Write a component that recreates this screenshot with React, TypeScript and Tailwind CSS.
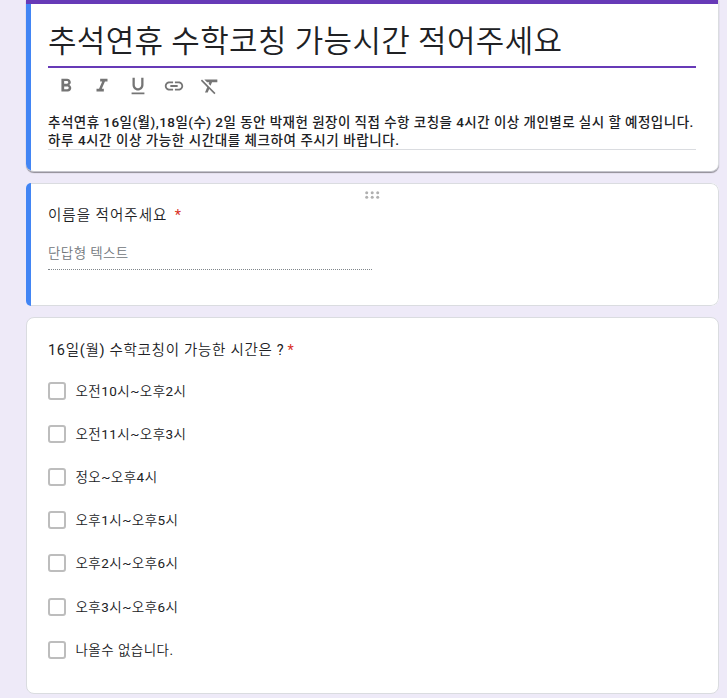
import React from 'react';
import {
  MdFormatBold,
  MdFormatItalic,
  MdFormatUnderlined,
  MdInsertLink,
  MdFormatClear,
} from 'react-icons/md';

const timeOptions = [
  '오전10시~오후2시',
  '오전11시~오후3시',
  '정오~오후4시',
  '오후1시~오후5시',
  '오후2시~오후6시',
  '오후3시~오후6시',
  '나올수 없습니다.',
];

const tools = [
  { name: 'bold', Icon: MdFormatBold },
  { name: 'italic', Icon: MdFormatItalic },
  { name: 'underline', Icon: MdFormatUnderlined },
  { name: 'link', Icon: MdInsertLink },
  { name: 'clear', Icon: MdFormatClear },
];

const FormHeader: React.FC = () => (
  <section className="h-[172px] overflow-hidden rounded-b-lg border-r border-b border-r-[#dadce0] border-b-[#c4c4cc] bg-white shadow-[0_1px_1px_rgba(0,0,0,0.4)]">
    <div className="h-1 bg-[#673ab7]" />
    <div className="h-[168px] border-l-[5px] border-[#4285f4] pt-[14px] pr-[22px] pl-[17px]">
      <h1 className="h-[50px] border-b-2 border-[#673ab7] text-[31px] leading-[47px] tracking-[0.32px] whitespace-nowrap">
        추석연휴 수학코칭 가능시간 적어주세요
      </h1>
      <div className="flex h-9 items-center gap-[14px] pl-[7px] text-[#757575]">
        {tools.map(({ name, Icon }) => (
          <Icon key={name} size={22} />
        ))}
      </div>
      <div className="mt-[9px] h-[37px] border-b border-[#dadce0] font-['Roboto','Noto_Sans_CJK_KR',sans-serif] text-[13.5px] leading-[18px] font-medium whitespace-nowrap">
        <p className="tracking-[0.46px]">추석연휴 16일(월),18일(수) 2일 동안 박재헌 원장이 직접 수항 코칭을 4시간 이상 개인별로 실시 할 예정입니다.</p>
        <p className="tracking-[0.56px]">하루 4시간 이상 가능한 시간대를 체크하여 주시기 바랍니다.</p>
      </div>
    </div>
  </section>
);

const NameQuestion: React.FC = () => (
  <section className="mt-[11px] flex h-[123px] overflow-hidden rounded-lg rounded-l-[5px] bg-white">
    <div className="w-[5px] bg-[#4285f4]" />
    <div className="flex-1 rounded-r-lg border border-l-0 border-[#dadce0] pl-[17px]">
      <div className="flex h-[21px] items-end justify-center pr-[22px] pb-[6px]">
        {/* Drag handle */}
        <svg width="15" height="8" viewBox="0 0 15 8" fill="#b0b0b0">
          {[1.7, 7.2, 12.7].map((x) => (
            <g key={x}>
              <circle cx={x} cy="1.7" r="1.5" />
              <circle cx={x} cy="6.3" r="1.5" />
            </g>
          ))}
        </svg>
      </div>
      <div className="h-5 text-[14.5px] leading-[22px] tracking-[1px]">
        이름을 적어주세요<span className="pl-[7.5px] text-[#d93025]">*</span>
      </div>
      <div className="mt-[17px] h-[28px] w-[324px] border-b border-dotted border-[#80868b] text-[13.5px] leading-[23px] tracking-[0.4px] text-[#70757a]">
        단답형 텍스트
      </div>
    </div>
  </section>
);

const TimeQuestion: React.FC = () => (
  <section className="mt-[11px] h-[377px] rounded-lg border border-[#dadce0] bg-white pt-[22px] pl-[21px]">
    <div className="h-5 text-[14.5px] leading-[22px] tracking-[0.7px]">
      16일(월) 수학코칭이 가능한 시간은 ?<span className="pl-[3px] text-[#d93025]">*</span>
    </div>
    <ul className="mt-[9px]">
      {timeOptions.map((option) => (
        <li key={option} className="flex h-[43.2px] items-center">
          <span className="h-[18px] w-[18px] rounded-[3px] border-2 border-[#bdbdbd]" />
          <span className="pl-[9.5px] text-[13.5px] leading-5 tracking-[0.45px]">{option}</span>
        </li>
      ))}
    </ul>
  </section>
);

const App: React.FC = () => {
  return (
    <main
      lang="ko"
      className="h-[698px] w-[727px] overflow-hidden bg-[#eeeaf8] pr-2 pl-[26px] font-['Roboto','Noto_Sans_CJK_KR_DemiLight','Noto_Sans_CJK_KR',sans-serif] text-[#202124]"
    >
      <FormHeader />
      <NameQuestion />
      <TimeQuestion />
    </main>
  );
};

export default App;
